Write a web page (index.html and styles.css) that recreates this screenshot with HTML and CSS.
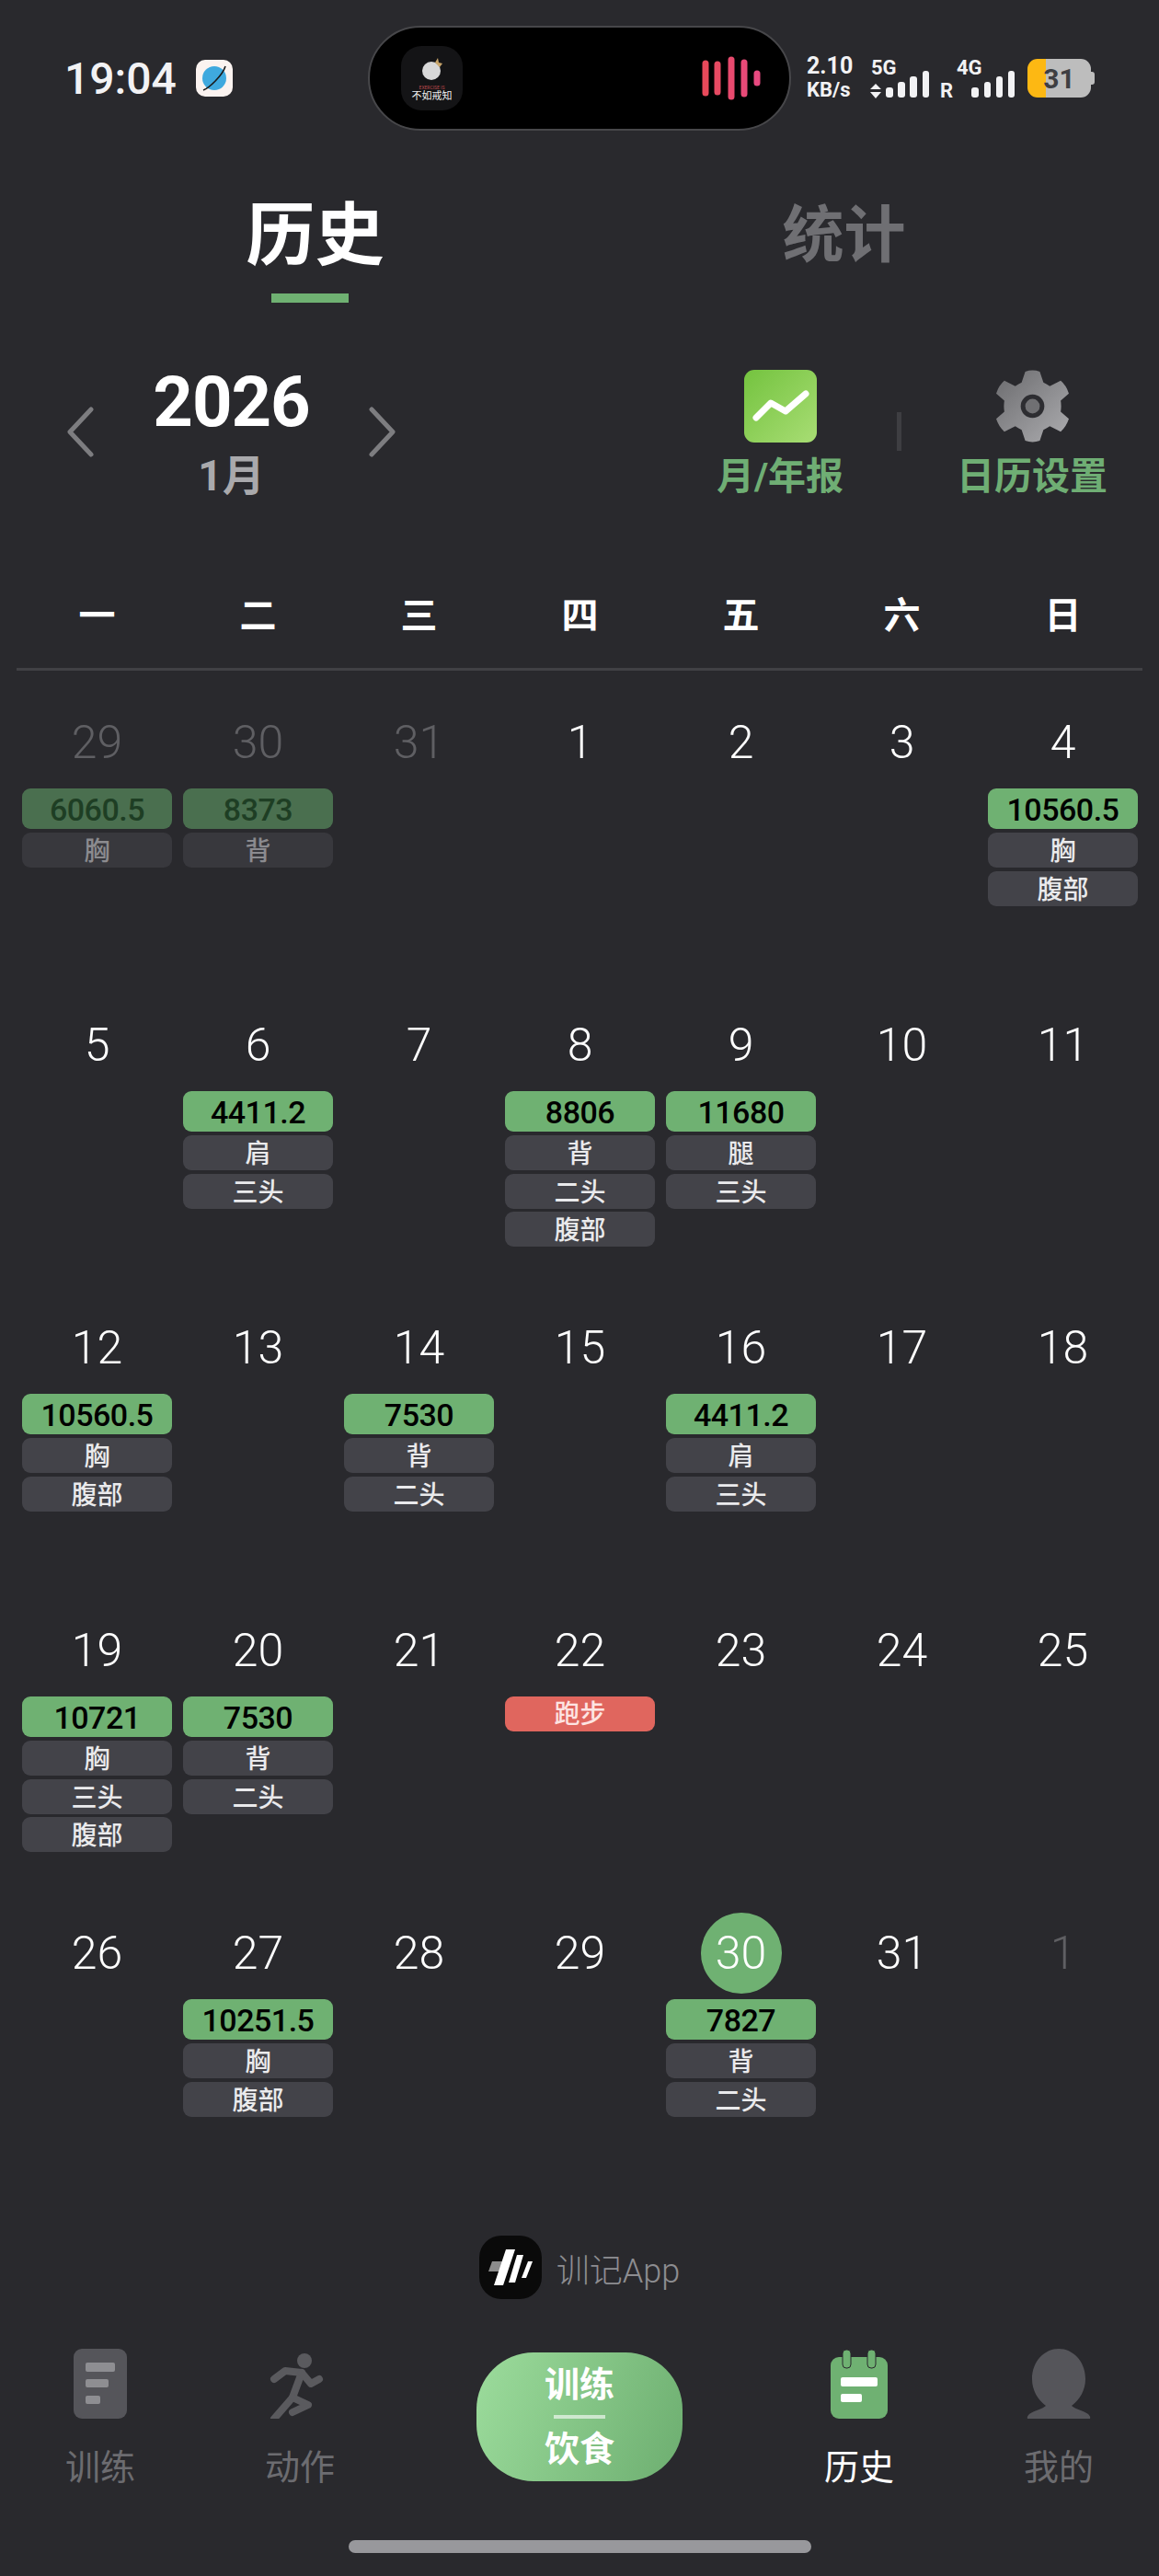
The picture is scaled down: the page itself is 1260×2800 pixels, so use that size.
FILE: index.html
```html
<!DOCTYPE html>
<html lang="zh-CN">
<head>
  <meta charset="UTF-8" />
  <meta name="viewport" content="width=device-width, initial-scale=1.0"/>
  <title>训记 - 历史</title>
  <link rel="stylesheet" href="styles.css">
</head>
<body>
  <header class="status-bar">
    <span class="clock">19:04</span>
    <svg class="planet" viewBox="0 0 40 40">
      <rect width="40" height="40" rx="10" fill="#fbf3f0"/>
      <circle cx="20" cy="20" r="13" fill="#3fa9de"/>
      <path d="M8 33 C14 31 29 17 32 7" fill="none" stroke="#1a1a1a" stroke-width="1.6"/>
    </svg>
    <div class="island">
      <div class="island-app">
        <svg class="moon" viewBox="0 0 24 26">
          <circle cx="11" cy="15" r="10" fill="#d8d8d8"/>
          <path d="M15 6 L18 1 L19 6 L23 7 L20 11 Z" fill="#c9a66b"/>
        </svg>
        <span class="app-tiny">EXERCISE IS</span>
        <span class="app-name">不如戒知</span>
      </div>
      <svg class="wave" viewBox="0 0 70 48">
        <g stroke-width="7" stroke-linecap="round">
          <line x1="4" y1="8" x2="4" y2="40" stroke="#e8495a"/>
          <line x1="17" y1="9" x2="17" y2="39" stroke="#e64a62"/>
          <line x1="32" y1="4" x2="32" y2="44" stroke="#e84a6e"/>
          <line x1="46" y1="7" x2="46" y2="41" stroke="#e84a78"/>
          <line x1="60" y1="19" x2="60" y2="29" stroke="#e84a80"/>
        </g>
      </svg>
    </div>
    <div class="speed">
      <span>2.10</span>
      <span class="speed-unit">KB/s</span>
    </div>
    <svg class="signal" viewBox="945 55 168 60">
      <g fill="#f2f2f4">
        <text class="signal-text" x="947" y="81">5G</text>
        <path d="M952 91 L958 97 H946 Z M952 107 L958 100 H946 Z"/>
        <rect x="963" y="95" width="8" height="11" rx="3"/>
        <rect x="976" y="89" width="8" height="17" rx="3"/>
        <rect x="989" y="83" width="8" height="23" rx="3"/>
        <rect x="1003" y="77" width="7" height="29" rx="3"/>
        <text class="signal-text" x="1022" y="106">R</text>
        <text class="signal-text" x="1040" y="81">4G</text>
        <rect x="1056" y="95" width="8" height="11" rx="3"/>
        <rect x="1070" y="89" width="7" height="17" rx="3"/>
        <rect x="1083" y="83" width="7" height="23" rx="3"/>
        <rect x="1096" y="77" width="7" height="29" rx="3"/>
      </g>
    </svg>
    <div class="battery">31</div>
  </header>

  <nav class="tabs">
    <div class="tab active">
      <span class="tab-title">历史</span>
      <span class="tab-line"></span>
    </div>
    <div class="tab">
      <span class="tab-title">统计</span>
    </div>
  </nav>

  <section class="month-head">
    <svg class="arrow" viewBox="0 0 32 55"><path d="M28 3 L5 27.5 L28 52"/></svg>
    <div class="month-title">
      <div class="year">2026</div>
      <div class="month">1月</div>
    </div>
    <svg class="arrow" viewBox="0 0 32 55"><path d="M4 3 L27 27.5 L4 52"/></svg>
    <div class="tools">
      <div class="tool">
        <svg class="tool-icon" viewBox="0 0 79 79">
          <defs>
            <linearGradient id="reportBg" x1="0" y1="0" x2="1" y2="1">
              <stop offset="0" stop-color="#74c33f"/>
              <stop offset="1" stop-color="#a8dd74"/>
            </linearGradient>
          </defs>
          <rect width="79" height="79" rx="11" fill="url(#reportBg)"/>
          <path d="M13 52 L29 36 L45 45 L67 26" fill="none" stroke="#fff" stroke-width="7" stroke-linecap="round" stroke-linejoin="round"/>
        </svg>
        <span class="tool-label">月/年报</span>
      </div>
      <span class="tool-sep"></span>
      <div class="tool tool-wide">
        <svg class="tool-icon" viewBox="0 0 80 80">
          <defs>
            <linearGradient id="gearBg" x1="0" y1="0" x2="1" y2="1">
              <stop offset="0" stop-color="#6b6b6e"/>
              <stop offset="1" stop-color="#adadb0"/>
            </linearGradient>
          </defs>
          <path fill="url(#gearBg)" d="M32 2 Q40 -1 48 2 L52 14 Q56 16 59 18 L71 12 Q77 17 80 26 L71 34 Q72 40 71 46 L80 54 Q77 63 71 68 L59 62 Q56 64 52 66 L48 78 Q40 81 32 78 L28 66 Q24 64 21 62 L9 68 Q3 63 0 54 L9 46 Q8 40 9 34 L0 26 Q3 17 9 12 L21 18 Q24 16 28 14 Z"/>
          <circle cx="40" cy="40" r="13" fill="#2d2d31"/>
          <circle cx="40" cy="40" r="8" fill="#707073"/>
        </svg>
        <span class="tool-label">日历设置</span>
      </div>
    </div>
  </section>

  <div class="weekdays">
    <span>一</span><span>二</span><span>三</span><span>四</span><span>五</span><span>六</span><span>日</span>
  </div>

  <main class="calendar">
    <div class="day other">
      <div class="num">29</div>
      <div class="load">6060.5</div>
      <div class="part">胸</div>
    </div>
    <div class="day other">
      <div class="num">30</div>
      <div class="load">8373</div>
      <div class="part">背</div>
    </div>
    <div class="day other"><div class="num">31</div></div>
    <div class="day"><div class="num">1</div></div>
    <div class="day"><div class="num">2</div></div>
    <div class="day"><div class="num">3</div></div>
    <div class="day">
      <div class="num">4</div>
      <div class="load">10560.5</div>
      <div class="part">胸</div>
      <div class="part">腹部</div>
    </div>

    <div class="day"><div class="num">5</div></div>
    <div class="day">
      <div class="num">6</div>
      <div class="load">4411.2</div>
      <div class="part">肩</div>
      <div class="part">三头</div>
    </div>
    <div class="day"><div class="num">7</div></div>
    <div class="day">
      <div class="num">8</div>
      <div class="load">8806</div>
      <div class="part">背</div>
      <div class="part">二头</div>
      <div class="part">腹部</div>
    </div>
    <div class="day">
      <div class="num">9</div>
      <div class="load">11680</div>
      <div class="part">腿</div>
      <div class="part">三头</div>
    </div>
    <div class="day"><div class="num">10</div></div>
    <div class="day"><div class="num">11</div></div>

    <div class="day">
      <div class="num">12</div>
      <div class="load">10560.5</div>
      <div class="part">胸</div>
      <div class="part">腹部</div>
    </div>
    <div class="day"><div class="num">13</div></div>
    <div class="day">
      <div class="num">14</div>
      <div class="load">7530</div>
      <div class="part">背</div>
      <div class="part">二头</div>
    </div>
    <div class="day"><div class="num">15</div></div>
    <div class="day">
      <div class="num">16</div>
      <div class="load">4411.2</div>
      <div class="part">肩</div>
      <div class="part">三头</div>
    </div>
    <div class="day"><div class="num">17</div></div>
    <div class="day"><div class="num">18</div></div>

    <div class="day">
      <div class="num">19</div>
      <div class="load">10721</div>
      <div class="part">胸</div>
      <div class="part">三头</div>
      <div class="part">腹部</div>
    </div>
    <div class="day">
      <div class="num">20</div>
      <div class="load">7530</div>
      <div class="part">背</div>
      <div class="part">二头</div>
    </div>
    <div class="day"><div class="num">21</div></div>
    <div class="day">
      <div class="num">22</div>
      <div class="cardio">跑步</div>
    </div>
    <div class="day"><div class="num">23</div></div>
    <div class="day"><div class="num">24</div></div>
    <div class="day"><div class="num">25</div></div>

    <div class="day"><div class="num">26</div></div>
    <div class="day">
      <div class="num">27</div>
      <div class="load">10251.5</div>
      <div class="part">胸</div>
      <div class="part">腹部</div>
    </div>
    <div class="day"><div class="num">28</div></div>
    <div class="day"><div class="num">29</div></div>
    <div class="day">
      <div class="num"><span class="today">30</span></div>
      <div class="load">7827</div>
      <div class="part">背</div>
      <div class="part">二头</div>
    </div>
    <div class="day"><div class="num">31</div></div>
    <div class="day other"><div class="num">1</div></div>
  </main>

  <div class="brand">
    <svg class="brand-logo" viewBox="0 0 68 69">
      <rect width="68" height="69" rx="24" fill="#0a0a0a"/>
      <path d="M14 28 L26 28 L23 39 L10 39 Z" fill="#8c8c8c"/>
      <path d="M29 15 L39 15 L26 54 L16 54 Z" fill="#fff"/>
      <path d="M41 21 L48 21 L39 51 L32 51 Z" fill="#fff"/>
      <path d="M53 28 L58 28 L51 46 L46 46 Z" fill="#fff"/>
    </svg>
    <span class="brand-name">训记App</span>
  </div>

  <nav class="bottom-nav">
    <div class="nav-item">
      <svg class="nav-icon" viewBox="0 0 76 76">
        <rect x="9" width="58" height="76" rx="9" fill="#55555a"/>
        <rect x="22" y="15" width="32" height="10" rx="2" fill="#8e8e92"/>
        <rect x="22" y="33" width="25" height="9" rx="2" fill="#8e8e92"/>
        <rect x="22" y="51" width="16" height="9" rx="2" fill="#8e8e92"/>
      </svg>
      <span class="nav-label">训练</span>
    </div>
    <div class="nav-item">
      <svg class="nav-icon" viewBox="8 3 76 76">
        <circle cx="51" cy="16" r="8" fill="#5a5a5e"/>
        <g fill="none" stroke="#5a5a5e" stroke-width="8" stroke-linecap="round" stroke-linejoin="round">
          <path d="M18 36 L30 27 L48 29 L38 56 L18 79"/>
          <path d="M48 29 L58 41 L67 36"/>
          <path d="M38 56 L55 64 L38 72"/>
        </g>
      </svg>
      <span class="nav-label">动作</span>
    </div>
    <div class="nav-center">
      <div class="log-btn">
        <span>训练</span>
        <span class="log-line"></span>
        <span>饮食</span>
      </div>
    </div>
    <div class="nav-item current">
      <svg class="nav-icon" viewBox="0 0 76 76">
        <rect x="7" y="9" width="62" height="67" rx="9" fill="#6fb172"/>
        <rect x="20" y="1" width="9" height="20" rx="4" fill="#6fb172" stroke="#29292d" stroke-width="1"/>
        <rect x="47" y="1" width="9" height="20" rx="4" fill="#6fb172" stroke="#29292d" stroke-width="1"/>
        <rect x="18" y="31" width="40" height="10" rx="2" fill="#fff"/>
        <rect x="18" y="49" width="23" height="9" rx="2" fill="#fff"/>
      </svg>
      <span class="nav-label">历史</span>
    </div>
    <div class="nav-item">
      <svg class="nav-icon" viewBox="0 0 76 76">
        <path fill="#55555a" d="M38 0 C53 0 67 13 67 33 C67 45 61 55 52 62 C56 66 65 67 70 71 Q73 74 72 76 H4 Q3 74 6 71 C11 67 20 66 24 62 C15 55 9 45 9 33 C9 13 23 0 38 0 Z"/>
      </svg>
      <span class="nav-label">我的</span>
    </div>
  </nav>

  <div class="home-bar"></div>
</body>
</html>
```

FILE: styles.css
```css
body {
  font-family: Roboto, "Noto Sans CJK SC", sans-serif;
  background-color: #29292d;
  margin: 0;
  padding: 0;
  color: #fff;
  width: 1260px;
  height: 2800px;
  overflow: hidden;
}

/* status bar */
.status-bar {
  display: flex;
  align-items: center;
  height: 170px;
  padding-left: 70px;
}
.clock {
  font-size: 48px;
  font-weight: 500;
  color: #f2f2f4;
  width: 123px;
  white-space: nowrap;
}
.planet {
  width: 40px;
  height: 40px;
  margin-left: 20px;
}
.island {
  display: flex;
  align-items: center;
  justify-content: space-between;
  box-sizing: border-box;
  width: 460px;
  height: 114px;
  margin-left: 147px;
  padding: 0 25px 0 34px;
  background-color: #000;
  border: 2px solid #47474a;
  border-radius: 57px;
}
.island-app {
  display: flex;
  flex-direction: column;
  align-items: center;
  width: 67px;
  height: 70px;
  padding-top: 12px;
  box-sizing: border-box;
  background-color: #141416;
  border-radius: 22px;
}
.moon {
  width: 24px;
  height: 26px;
}
.app-tiny {
  font-size: 5px;
  line-height: 6px;
  margin-top: 4px;
  color: #b8474a;
  white-space: nowrap;
}
.app-name {
  font-size: 11px;
  line-height: 13px;
  color: #f0f0f0;
  white-space: nowrap;
}
.wave {
  width: 70px;
  height: 48px;
}
.speed {
  display: flex;
  flex-direction: column;
  margin-left: 17px;
  font-size: 25px;
  font-weight: 700;
  line-height: 26px;
  color: #f2f2f4;
  width: 52px;
}
.speed-unit {
  font-size: 22px;
}
.signal {
  width: 168px;
  height: 60px;
  margin-left: 16px;
}
.signal-text {
  font-size: 22px;
  font-weight: 700;
  font-family: Roboto, sans-serif;
}
.battery {
  position: relative;
  display: flex;
  align-items: center;
  justify-content: center;
  width: 69px;
  height: 42px;
  margin-left: 4px;
  border-radius: 11px;
  background: linear-gradient(90deg, #fdb813 20px, #bdbdbd 20px);
  color: #3f3f42;
  font-size: 30px;
  font-weight: 700;
}
.battery::after {
  content: "";
  position: absolute;
  right: -4px;
  top: 14px;
  width: 4px;
  height: 14px;
  border-radius: 0 3px 3px 0;
  background-color: #bdbdbd;
}

/* tabs */
.tabs {
  display: grid;
  grid-template-columns: 575px 575px;
  padding: 46px 55px 0;
  height: 113px;
}
.tab {
  display: flex;
  flex-direction: column;
  align-items: center;
}
.tab-title {
  font-size: 67px;
  font-weight: 700;
  line-height: 80px;
  color: #6f6f73;
}
.tab.active .tab-title {
  font-size: 75px;
  color: #fff;
}
.tab-line {
  width: 84px;
  height: 10px;
  margin: 23px 12px 0 0;
  background-color: #6fb172;
}

/* month header */
.month-head {
  display: flex;
  align-items: flex-start;
  height: 160px;
  margin-top: 66px;
  padding-left: 71px;
}
.arrow {
  width: 32px;
  height: 55px;
  margin-top: 47px;
  fill: none;
  stroke: #7d7d80;
  stroke-width: 5;
  stroke-linecap: round;
  stroke-linejoin: round;
}
.month-title {
  width: 297px;
  text-align: center;
}
.year {
  font-size: 76px;
  font-weight: 700;
  line-height: 84px;
  letter-spacing: -1px;
}
.month {
  font-size: 46px;
  font-weight: 700;
  line-height: 76px;
  color: #a9a9ac;
}
.tools {
  display: flex;
  align-items: flex-start;
  margin-left: 336px;
}
.tool {
  display: flex;
  flex-direction: column;
  align-items: center;
  width: 160px;
  padding-top: 7px;
}
.tool-icon {
  width: 79px;
  height: 79px;
}
.tool-label {
  margin-top: 13px;
  font-size: 41px;
  font-weight: 700;
  line-height: 48px;
  color: #6fae74;
  white-space: nowrap;
}
.tool-sep {
  width: 5px;
  height: 42px;
  margin: 53px 62px 0 47px;
  background-color: #3e3e42;
}

/* weekdays */
.weekdays {
  display: grid;
  grid-template-columns: repeat(7, 175px);
  margin: 91px 18px 0;
  padding-bottom: 32px;
  border-bottom: 3px solid #414145;
  font-size: 40px;
  font-weight: 700;
  line-height: 48px;
  text-align: center;
}

/* calendar */
.calendar {
  display: grid;
  grid-template-columns: repeat(7, 175px);
  grid-auto-rows: 329px;
  margin: 0 18px;
}
.day {
  display: flex;
  flex-direction: column;
  padding: 48px 6px 0;
}
.num {
  display: flex;
  align-items: center;
  justify-content: center;
  height: 60px;
  margin-bottom: 20px;
  font-size: 50px;
  font-weight: 300;
  color: #fff;
}
.today {
  display: flex;
  align-items: center;
  justify-content: center;
  flex: none;
  width: 88px;
  height: 88px;
  border-radius: 50%;
  background-color: #6fb172;
}
.load,
.part,
.cardio {
  text-align: center;
  border-radius: 9px;
}
.load {
  height: 44px;
  margin-bottom: 4px;
  background-color: #6fb172;
  color: #000;
  font-size: 34px;
  font-weight: 500;
  line-height: 46px;
  letter-spacing: -0.5px;
}
.part {
  height: 38px;
  margin-bottom: 3.5px;
  background-color: #434349;
  color: #eaeaec;
  font-size: 28px;
  font-weight: 500;
  line-height: 41px;
}
.cardio {
  height: 38px;
  background-color: #e0665e;
  color: #fde4e2;
  font-size: 28px;
  font-weight: 500;
  line-height: 39px;
}
.day.other .num {
  color: #5f5f63;
}
.day.other .load {
  background-color: #4a6f4f;
  color: #1e3e24;
}
.day.other .part {
  background-color: #38383d;
  color: #8b8b8f;
}

/* brand */
.brand {
  display: flex;
  align-items: center;
  justify-content: center;
  gap: 16px;
  height: 69px;
  margin-top: 56px;
}
.brand-logo {
  width: 68px;
  height: 69px;
}
.brand-name {
  font-size: 36px;
  font-weight: 300;
  color: #8d8d91;
}

/* bottom nav */
.bottom-nav {
  display: grid;
  grid-template-columns: 218px 216px 392px 216px 218px;
  margin-top: 54px;
}
.nav-item {
  display: flex;
  flex-direction: column;
  align-items: center;
}
.nav-icon {
  width: 76px;
  height: 76px;
}
.nav-label {
  margin-top: 29px;
  font-size: 38px;
  line-height: 48px;
  color: #6c6c70;
}
.nav-item.current .nav-label {
  color: #fff;
}
.nav-center {
  display: flex;
  justify-content: center;
  padding-top: 4px;
}
.log-btn {
  display: flex;
  flex-direction: column;
  align-items: center;
  box-sizing: border-box;
  width: 224px;
  height: 140px;
  padding-top: 10px;
  border-radius: 62px;
  background: linear-gradient(110deg, #9cdc9c, #6dae70);
  font-size: 38px;
  font-weight: 700;
  line-height: 50px;
}
.log-line {
  width: 56px;
  height: 4px;
  margin: 8px 0;
  background-color: rgba(255,255,255,0.6);
}
.home-bar {
  width: 503px;
  height: 14px;
  margin: 55px auto 0;
  border-radius: 7px;
  background-color: #98989c;
}
```
